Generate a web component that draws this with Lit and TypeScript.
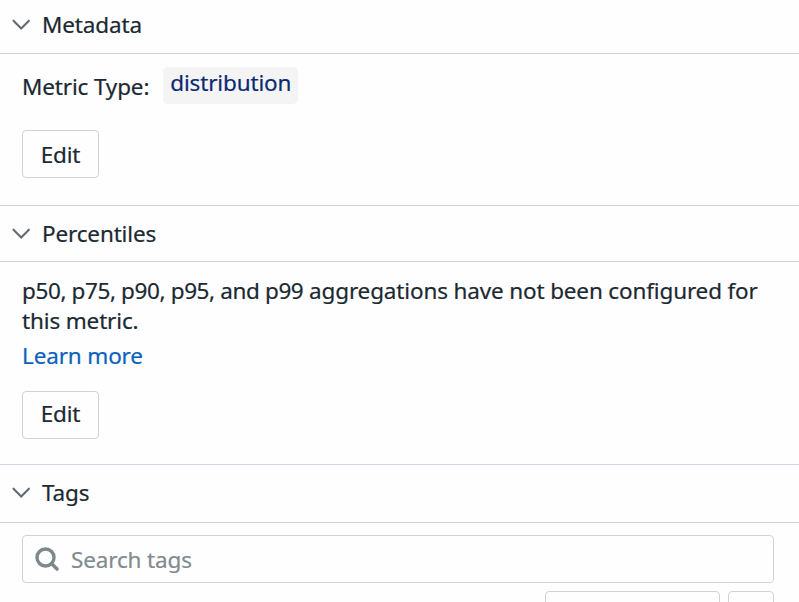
import { LitElement, html, css } from "lit";
import { customElement, property } from "lit/decorators.js";

@customElement("section-header")
class SectionHeader extends LitElement {
  @property() label = "";
  static styles = css`
    :host { display: flex; align-items: center; box-sizing: border-box; padding-left: 11px; border-bottom: 1px solid #d0d4da; }
    svg { flex: none; margin-right: 11px; }
  `;
  render() {
    return html`<svg width="20" height="14" viewBox="0 0 20 14" fill="none" stroke="#626c70" stroke-width="2.1" stroke-linecap="round"><path d="M2.5 2.7l7.7 7.7 7.7-7.7" /></svg><span>${this.label}</span>`;
  }
}

@customElement("app-root")
class AppRoot extends LitElement {
  static styles = css`
    :host { display: block; height: 602px; overflow: hidden; background: #fefdff; color: #1b2930; font: 22.5px/30px "Noto Sans", sans-serif; letter-spacing: -0.15px; -webkit-text-stroke: 0.2px currentColor; }
    section { box-sizing: border-box; border-bottom: 1px solid #d0d4da; }
    .meta { height: 206px; }
    .pct { height: 259px; }
    .tags { border: 0; }
    .h1 { height: 54px; padding-bottom: 4px; }
    .h2 { height: 56px; }
    .h3 { height: 58px; padding-bottom: 1px; }
    .body { padding: 0 22px; }
    .type { display: flex; align-items: flex-start; padding-top: 13px; gap: 14px; }
    .type span { padding-top: 5px; }
    .chip { box-sizing: border-box; width: 135px; height: 37px; padding: 1px 7px; border-radius: 5px; background: #f4f4f4; color: #0b2a70; }
    .btn { display: block; box-sizing: border-box; width: 77px; height: 48px; padding: 1px 0 0; border: 1px solid #cfd3d8; border-radius: 4px; background: #fefdff; color: inherit; font: inherit; letter-spacing: inherit; }
    .meta .btn { margin-top: 26px; padding-top: 2px; }
    p { margin: 0; padding-top: 14px; line-height: 30px; }
    .levels { letter-spacing: -0.38px; }
    a { display: block; margin-top: 5px; color: #0b62ba; }
    .pct .btn { margin-top: 20px; padding: 0 0 2px; }
    .search { display: flex; align-items: center; box-sizing: border-box; width: 752px; height: 48px; margin-top: 12px; padding-left: 12px; gap: 11px; border: 1px solid #cfd3d8; border-radius: 4px; color: #828b8e; }
    .search span { padding-top: 1px; }
    .row { display: flex; justify-content: flex-end; gap: 8px; padding: 8px 3px 0 0; }
    .box { box-sizing: border-box; height: 40px; width: 175px; border: 1px solid #cfd3d8; border-radius: 4px; }
    .small { width: 46px; }
  `;
  render() {
    return html`
      <section class="meta">
        <section-header class="h1" label="Metadata"></section-header>
        <div class="body">
          <div class="type"><span>Metric Type:</span><div class="chip">distribution</div></div>
          <button class="btn">Edit</button>
        </div>
      </section>
      <section class="pct">
        <section-header class="h2" label="Percentiles"></section-header>
        <div class="body">
          <p><span class="levels">p50, p75, p90, p95, and p99</span> <span>aggregations have not been configured for</span> <span>this metric.</span></p>
          <a>Learn more</a>
          <button class="btn">Edit</button>
        </div>
      </section>
      <section class="tags">
        <section-header class="h3" label="Tags"></section-header>
        <div class="body">
          <div class="search">
            <svg width="25" height="25" viewBox="0 0 25 25" fill="none" stroke="#7e888b"><circle cx="10.5" cy="10.5" r="8.5" stroke-width="3.4" /><path d="M17 17l5 5" stroke-width="3.6" stroke-linecap="round" /></svg>
            <span>Search tags</span>
          </div>
          <div class="row"><div class="box"></div><div class="box small"></div></div>
        </div>
      </section>
    `;
  }
}
